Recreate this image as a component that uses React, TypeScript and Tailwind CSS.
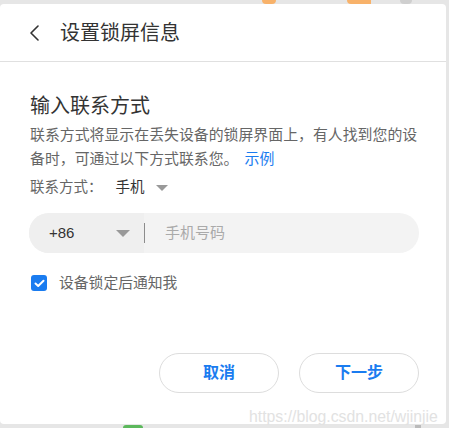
import React from "react";

export default function App() {
  return (
    <div
      className="relative w-[449px] h-[428px] overflow-hidden bg-[#e6e6e6] pt-[4px]"
      style={{ fontFamily: '"Liberation Sans", "Noto Sans CJK SC", sans-serif' }}
    >
      {/* background bits peeking out */}
      <div className="absolute left-[262px] top-0 w-[14px] h-[4px] bg-[#f8b26a] rounded-b-full" />
      <div className="absolute left-[347px] top-0 w-[24px] h-[4px] bg-[#f8b26a] rounded-bl-full" />
      <div className="absolute left-[400px] top-0 w-[12px] h-[4px] bg-[#cfcfcf] rounded-b-full" />
      <div className="absolute left-[123px] top-[425px] w-[20px] h-[3px] bg-[#5cb85c] rounded-t-sm" />
      <div className="absolute left-[415px] top-[425px] w-[6px] h-[3px] bg-[#bbbbbb]" />

      <div className="relative w-[446px] h-[420px] bg-white rounded-[4px] flex flex-col">
        {/* header */}
        <div className="h-[58px] flex items-center pl-[29px] border-b border-[#e0e0e0]">
          <svg width="11" height="16" viewBox="0 0 11 16" fill="none">
            <path d="M9 1 L2 8 L9 15" stroke="#333" strokeWidth="1.6" strokeLinecap="round" strokeLinejoin="round" />
          </svg>
          <span className="ml-[20px] text-[20px] leading-[26px] text-[#333]">设置锁屏信息</span>
        </div>

        {/* body */}
        <div className="flex flex-col pl-[30px] pr-[27px] pt-[31px]">
          <div className="text-[20px] leading-[26px] text-[#333]">输入联系方式</div>
          <div className="mt-[4px] text-[14.9px] leading-[24px] text-[#666] whitespace-nowrap">
            <div>联系方式将显示在丢失设备的锁屏界面上，有人找到您的设</div>
            <div>
              备时，可通过以下方式联系您。 <span className="text-[#1a7cf0] ml-[2px]">示例</span>
            </div>
          </div>

          <div className="mt-[6px] h-[22px] flex items-center text-[14.5px]">
            <span className="text-[#666]">联系方式：</span>
            <span className="ml-[13px] text-[#333]">手机</span>
            <svg className="ml-[11px]" width="12" height="6" viewBox="0 0 12 6">
              <path d="M0 0 L12 0 L6 6 Z" fill="#999" />
            </svg>
          </div>

          {/* phone input */}
          <div className="mt-[14px] w-[390px] h-[40px] rounded-full overflow-hidden flex items-center bg-[#f3f3f3] -ml-[1px]">
            <div className="h-full w-[115px] bg-[#efefef] flex items-center pl-[20px]">
              <span className="text-[15px] text-[#333]">+86</span>
              <svg className="ml-[42px]" width="14" height="7" viewBox="0 0 14 7">
                <path d="M0 0 L14 0 L7 7 Z" fill="#999" />
              </svg>
            </div>
            <div className="w-px h-[20px] bg-[#8c8c8c]" />
            <span className="ml-[20px] text-[15px] text-[#aaa]">手机号码</span>
          </div>

          {/* checkbox */}
          <div className="mt-[20px] h-[20px] flex items-center">
            <div className="w-[16px] h-[16px] rounded-[3px] bg-[#1a7cf0] flex items-center justify-center ml-[1px]">
              <svg width="11" height="9" viewBox="0 0 11 9" fill="none">
                <path d="M1.5 4.5 L4.2 7 L9.5 1.8" stroke="white" strokeWidth="2" strokeLinecap="round" strokeLinejoin="round" />
              </svg>
            </div>
            <span className="ml-[12px] text-[14.8px] text-[#666]">设备锁定后通知我</span>
          </div>

          {/* buttons */}
          <div className="mt-[60px] flex justify-end gap-[20px]">
            <button className="w-[120px] h-[40px] rounded-full border border-[#dddddd] bg-white text-[16px] font-bold text-[#1a7cf0]">
              取消
            </button>
            <button className="w-[120px] h-[40px] rounded-full border border-[#dddddd] bg-white text-[16px] font-bold text-[#1a7cf0]">
              下一步
            </button>
          </div>
        </div>

        {/* watermark */}
        <div className="absolute left-[249px] top-[403px] text-[15.8px] leading-[20px] text-[#e2e2e2] whitespace-nowrap">
          https://blog.csdn.net/wjinjie
        </div>
      </div>
    </div>
  );
}
